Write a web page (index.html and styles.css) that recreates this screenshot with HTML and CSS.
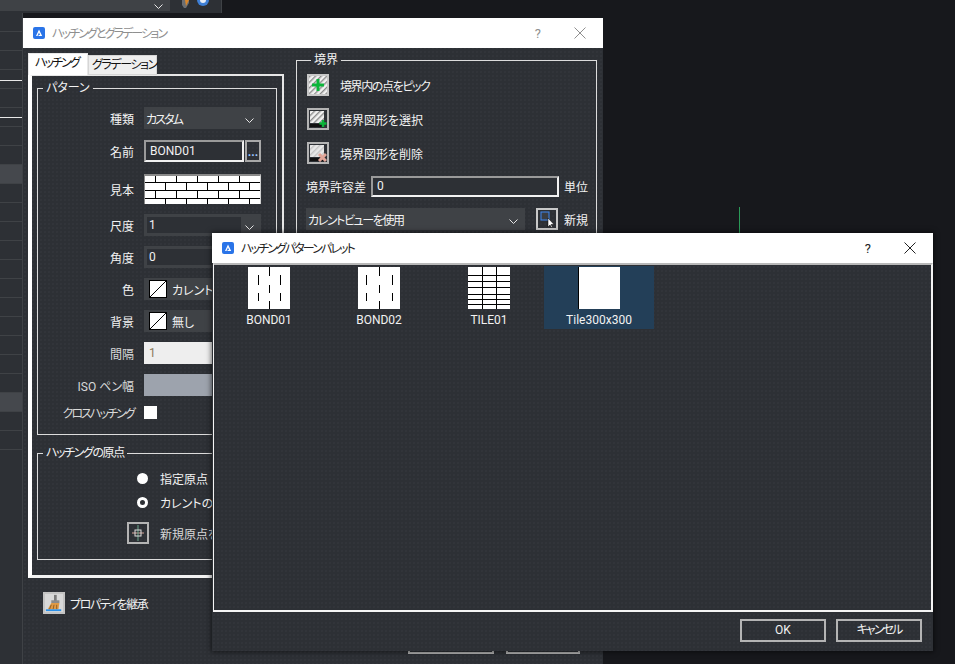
FILE: index.html
```html
<!DOCTYPE html>
<html lang="ja">
<head>
    <meta charset="UTF-8">
    <title>ハッチングとグラデーション</title>
    <link rel="stylesheet" href="styles.css">
</head>
<body>
    <svg class="defs" width="0" height="0">
        <defs>
            <pattern id="hatch" width="4" height="4" patternUnits="userSpaceOnUse" patternTransform="rotate(-45)">
                <rect width="4" height="4" fill="#f2f2f2"/>
                <rect width="4" height="1.4" fill="#8c8c8c"/>
            </pattern>
            <pattern id="hatch-light" width="4" height="4" patternUnits="userSpaceOnUse" patternTransform="rotate(-45)">
                <rect width="4" height="4" fill="#e8e8e8"/>
                <rect width="4" height="1.4" fill="#c4c4c4"/>
            </pattern>
            <pattern id="brick" width="21" height="16" patternUnits="userSpaceOnUse">
                <rect width="21" height="16" fill="#fff"/>
                <rect y="6" width="21" height="1" fill="#000"/>
                <rect y="14" width="21" height="1" fill="#000"/>
                <rect x="10" y="0" width="1" height="6" fill="#000"/>
                <rect x="20" y="7" width="1" height="7" fill="#000"/>
                <rect x="10" y="15" width="1" height="1" fill="#000"/>
            </pattern>
            <symbol id="app-logo" viewBox="0 0 12 12">
                <rect width="12" height="12" rx="2" fill="#2a74e8"/>
                <path d="M6 2.6 3 9h1.5L6 5.6 7 8H5.8l-.5 1H9.2z" fill="#fff"/>
            </symbol>
            <symbol id="chevron" viewBox="0 0 9 5">
                <path d="M.5.5 4.5 4.5 8.5.5" fill="none" stroke="#e6e6e6"/>
            </symbol>
            <symbol id="no-color" viewBox="0 0 18 18">
                <rect x=".5" y=".5" width="17" height="17" fill="#fff" stroke="#000"/>
                <path d="M1 17 17 1" stroke="#000"/>
            </symbol>
        </defs>
    </svg>

    <div class="toolbar">
        <div class="toolbar-field">
            <svg class="chev"><use href="#chevron"/></svg>
        </div>
        <svg class="toolbar-icons" width="40" height="8" viewBox="0 0 40 8">
            <path d="M4 0h7v3l-3 5H6L4 5z" fill="#6b6e72"/>
            <path d="M7 0h4L8 6z" fill="#d9862a"/>
            <path d="M19 0h12a6 6 0 0 1-12 0z" fill="#3e7fd6"/>
            <path d="M22 0h6a3 3 0 0 1-6 0z" fill="#e8eef6"/>
        </svg>
    </div>
    <div class="side-rows">
        <div class="side-row"></div>
        <div class="side-row"></div>
        <div class="side-row"></div>
        <div class="side-row mark-a"></div>
        <div class="side-row"></div>
        <div class="side-row mark-b"></div>
        <div class="side-row"></div>
        <div class="side-row"></div>
        <div class="side-row on"></div>
        <div class="side-row"></div>
        <div class="side-row"></div>
        <div class="side-row"></div>
        <div class="side-row"></div>
        <div class="side-row"></div>
        <div class="side-row"></div>
        <div class="side-row"></div>
        <div class="side-row"></div>
        <div class="side-row"></div>
        <div class="side-row"></div>
        <div class="side-row"></div>
        <div class="side-row on"></div>
        <div class="side-row"></div>
        <div class="side-row"></div>
    </div>
    <div class="axis-tick"></div>

    <div class="window hatch-dialog">
        <div class="titlebar inactive">
            <svg class="logo"><use href="#app-logo"/></svg>
            <span class="title-text kana-tight">ハッチングとグラデーション</span>
            <span class="help">?</span>
            <svg class="close" width="12" height="12" viewBox="0 0 12 12"><path d="M.5.5l11 11M11.5.5l-11 11" stroke="currentColor" fill="none"/></svg>
        </div>
        <div class="dialog-main">
            <div class="col-left">
                <div class="tabs">
                    <div class="tab active kana-tight">ハッチング</div>
                    <div class="tab grad-tab kana">グラデーション</div>
                </div>
                <div class="tab-panel">
                    <fieldset class="group pattern-group">
                        <legend>パターン</legend>
                        <div class="row">
                            <label>種類</label>
                            <div class="field select kana-tight">カスタム<svg class="chev"><use href="#chevron"/></svg></div>
                        </div>
                        <div class="row row-name">
                            <label>名前</label>
                            <div class="input name-input">BOND01</div>
                            <div class="dots">...</div>
                        </div>
                        <div class="row row-sample">
                            <label>見本</label>
                            <svg class="sample" width="117" height="30"><rect width="117" height="30" fill="url(#brick)"/></svg>
                        </div>
                        <div class="row">
                            <label>尺度</label>
                            <div class="field combo"><span class="combo-val">1</span><svg class="chev"><use href="#chevron"/></svg></div>
                        </div>
                        <div class="row">
                            <label>角度</label>
                            <div class="field combo"><span class="combo-val">0</span></div>
                        </div>
                        <div class="row">
                            <label>色</label>
                            <div class="field swatch-field"><svg class="swatch"><use href="#no-color"/></svg>カレント</div>
                        </div>
                        <div class="row">
                            <label>背景</label>
                            <div class="field swatch-field"><svg class="swatch"><use href="#no-color"/></svg>無し</div>
                        </div>
                        <div class="row">
                            <label class="dim">間隔</label>
                            <div class="field off-light">1</div>
                        </div>
                        <div class="row">
                            <label class="dim">ISO ペン幅</label>
                            <div class="field off-gray"></div>
                        </div>
                        <div class="row row-check">
                            <label class="dim kana-tight">クロスハッチング</label>
                            <div class="checkbox"></div>
                        </div>
                    </fieldset>
                    <fieldset class="group origin-group">
                        <legend class="kana">ハッチングの原点</legend>
                        <div class="radio-row"><span class="radio filled"></span>指定原点</div>
                        <div class="radio-row"><span class="radio"></span>カレントの原点を使用</div>
                        <div class="origin-row">
                            <div class="icon-btn">
                                <svg width="18" height="18" viewBox="0 0 18 18">
                                    <path d="M3 9h12" stroke="#d9a79c"/>
                                    <path d="M9 1v16" stroke="#6fa88e"/>
                                    <rect x="6" y="6" width="6" height="6" fill="none" stroke="#ddd"/>
                                </svg>
                            </div>
                            <span class="dim">新規原点を指定</span>
                        </div>
                    </fieldset>
                </div>
                <div class="inherit-row">
                    <div class="icon-btn light">
                        <svg width="20" height="20" viewBox="0 0 20 20">
                            <rect x="10" y="1" width="3" height="7" fill="#7a7a7a"/>
                            <rect x="7" y="7" width="9" height="3" fill="#8a8a8a"/>
                            <path d="M7 10h9l-1 7H3z" fill="#e09a45"/>
                            <path d="M7 12l-2 5M10 12l-1 5M13 12v5" stroke="#8a5a20"/>
                            <rect x="1" y="17" width="17" height="2" fill="#2a8fe8"/>
                        </svg>
                    </div>
                    <span class="kana">プロパティを継承</span>
                </div>
            </div>
            <fieldset class="group border-group">
                <legend>境界</legend>
                <div class="bound-row">
                    <div class="icon-btn pressed">
                        <svg width="18" height="18" viewBox="0 0 18 18">
                            <rect width="18" height="18" fill="url(#hatch)"/>
                            <path d="M9 3v12M3 9h12" stroke="#0bb53a" stroke-width="3"/>
                        </svg>
                    </div>
                    <span class="kana">境界内の点をピック</span>
                </div>
                <div class="bound-row">
                    <div class="icon-btn">
                        <svg width="18" height="18" viewBox="0 0 18 18">
                            <rect x="1" y="1" width="14" height="12" fill="url(#hatch)"/>
                            <rect x="1" y="14" width="14" height="3" fill="#111"/>
                            <path d="M14 10v7M10.500 13.500h7" stroke="#0bb53a" stroke-width="2.500"/>
                        </svg>
                    </div>
                    <span>境界図形を選択</span>
                </div>
                <div class="bound-row">
                    <div class="icon-btn">
                        <svg width="18" height="18" viewBox="0 0 18 18">
                            <rect x="1" y="1" width="14" height="12" fill="url(#hatch-light)"/>
                            <rect x="1" y="14" width="14" height="3" fill="#111"/>
                            <path d="M10 10l7 7M17 10l-7 7" stroke="#e0a598" stroke-width="3"/>
                        </svg>
                    </div>
                    <span>境界図形を削除</span>
                </div>
                <div class="tol-row">
                    <span>境界許容差</span>
                    <div class="input tol-input">0</div>
                    <span>単位</span>
                </div>
                <div class="view-row">
                    <div class="field view-select kana">カレントビューを使用<svg class="chev"><use href="#chevron"/></svg></div>
                    <div class="icon-btn pressed">
                        <svg width="18" height="18" viewBox="0 0 18 18">
                            <rect x="3" y="2" width="8" height="8" fill="#3a3d42" stroke="#3f86f0"/>
                            <path d="M10 8v9l2-2 1.500 2.500 1-.6L13 14.500h3z" fill="#fff" stroke="#000" stroke-width=".5"/>
                        </svg>
                    </div>
                    <span>新規</span>
                </div>
            </fieldset>
        </div>
        <div class="dialog-foot">
            <div class="btn foot-a"></div>
            <div class="btn foot-b"></div>
        </div>
    </div>

    <div class="window palette">
        <div class="titlebar">
            <svg class="logo"><use href="#app-logo"/></svg>
            <span class="title-text kana-tight">ハッチングパターンパレット</span>
            <span class="help">?</span>
            <svg class="close" width="12" height="12" viewBox="0 0 12 12"><path d="M.5.5l11 11M11.5.5l-11 11" stroke="currentColor" fill="none"/></svg>
        </div>
        <div class="pattern-list">
            <div class="pattern-item">
                <svg width="42" height="42" viewBox="0 0 42 42">
                    <rect width="42" height="42" fill="#fff"/>
                    <path d="M21.500 0v9M21.500 18v8M21.500 34v8M10.500 8v10M10.500 26v8M32.500 8v10M32.500 26v8" stroke="#000"/>
                </svg>
                <span>BOND01</span>
            </div>
            <div class="pattern-item">
                <svg width="42" height="42" viewBox="0 0 42 42">
                    <rect width="42" height="42" fill="#fff"/>
                    <path d="M21.500 0v9M21.500 18v8M21.500 34v8M8.500 8v10M8.500 26v8M34.500 8v10M34.500 26v8" stroke="#000"/>
                </svg>
                <span>BOND02</span>
            </div>
            <div class="pattern-item">
                <svg width="42" height="42" viewBox="0 0 42 42">
                    <rect width="42" height="42" fill="#fff"/>
                    <path d="M14.500 0v42M28.500 0v42M0 8.500h42M0 14.500h42M0 20.500h42M0 27.500h42M0 32.500h42M0 37.500h42" stroke="#000"/>
                </svg>
                <span>TILE01</span>
            </div>
            <div class="pattern-item selected">
                <svg width="42" height="42" viewBox="0 0 42 42">
                    <rect width="42" height="42" fill="#fff"/>
                    <path d="M.5 0v42" stroke="#000"/>
                </svg>
                <span>Tile300x300</span>
            </div>
        </div>
        <div class="palette-foot">
            <div class="btn">OK</div>
            <div class="btn kana-tight">キャンセル</div>
        </div>
    </div>
</body>
</html>
```

FILE: styles.css
```css
* {
    box-sizing: border-box;
}

html, body {
    height: 100%;
}

body {
    margin: 0;
    position: relative;
    overflow: hidden;
    background: #17181c;
    color: #f2f2f2;
    font-family: "Roboto", "Noto Sans CJK JP", sans-serif;
    font-size: 12px;
    font-feature-settings: "palt";
}

.defs {
    position: absolute;
}

/* the reference font has much narrower kana than Noto */
.kana {
    letter-spacing: -1.4px;
}

.kana-tight {
    letter-spacing: -1.9px;
}

/* behind the dialogs */
.toolbar {
    display: flex;
    align-items: flex-start;
    width: 222px;
    height: 13px;
    background: #2d3035;
    border-right: 1px solid #3f4246;
}

.toolbar-field {
    display: flex;
    justify-content: flex-end;
    width: 170px;
    height: 11px;
    padding-right: 7px;
    background: #3f4246;
}

.toolbar-icons {
    margin-left: 8px;
}

.side-rows {
    width: 23px;
    height: 651px;
    background: #2d3035;
    border-right: 1px solid #3f4246;
}

.side-row {
    height: 19px;
    border-bottom: 1px solid #3f4246;
}

.side-row.on {
    background: #45484d;
}

.side-row.mark-a {
    background: linear-gradient(#e8e8e8, #e8e8e8) 0 10px / 100% 1px no-repeat;
}

.side-row.mark-b {
    background: linear-gradient(#e8e8e8, #e8e8e8) 0 9px / 100% 1px no-repeat;
}

.axis-tick {
    position: absolute;
    left: 739px;
    top: 207px;
    width: 1px;
    height: 27px;
    background: #2b9a58;
}

/* windows */
.window {
    position: absolute;
    display: flex;
    flex-direction: column;
    background-color: #2d3035;
    background-image: radial-gradient(#32353a 0.7px, transparent 0.8px);
    background-size: 4px 4px;
}

.hatch-dialog {
    left: 23px;
    top: 18px;
    width: 580px;
    height: 646px;
}

.palette {
    left: 212px;
    top: 233px;
    width: 721px;
    height: 418px;
    box-shadow: 0 0 5px 1px rgba(0, 0, 0, 0.55);
}

.titlebar {
    display: flex;
    align-items: center;
    flex: none;
    height: 30px;
    padding: 0 17px 0 10px;
    background: #fff;
    color: #222;
}

.titlebar.inactive {
    color: #8f8f8f;
}

.logo {
    width: 12px;
    height: 12px;
    margin-right: 7px;
}

.title-text {
    flex: 1;
    padding-bottom: 2px;
}

.help {
    margin-right: 33px;
    font-size: 13px;
}

.close {
    color: inherit;
}

/* hatch dialog */
.dialog-main {
    display: flex;
    flex: 1;
    min-height: 0;
    padding: 5px 0 0 5px;
}

.col-left {
    width: 256px;
    margin-right: 12px;
}

.tabs {
    display: flex;
    align-items: flex-start;
    height: 21px;
}

.tab {
    height: 20px;
    margin-top: 2px;
    padding: 0 3px;
    background: #eeeeee;
    border: 1px solid #d6d6d6;
    color: #111;
    line-height: 18px;
    white-space: nowrap;
}

.grad-tab {
    width: 69px;
}

.tab.active {
    width: 60px;
    height: 22px;
    margin-top: 0;
    padding: 0 6px;
    background: #fff;
    border: 1px solid #e8e8e8;
    border-bottom: 0;
    z-index: 1;
}

.tab-panel {
    height: 504px;
    padding: 4px 5px 0 5px;
    border: 2px solid #e6e6e6;
    border-left: 4px solid #fff;
    border-bottom: 3px solid #f2f2f2;
}

.group {
    margin: 0;
    min-width: 0;
    padding: 0;
    border: 1px solid #dcdcdc;
}

.group legend {
    margin-left: 5px;
    padding: 0 3px;
    line-height: 16px;
}

.pattern-group {
    height: 355px;
    padding-top: 11px;
}

.row {
    display: flex;
    align-items: center;
    height: 22px;
    margin-bottom: 10px;
    white-space: nowrap;
}

.row label {
    width: 96px;
    margin-right: 10px;
    text-align: right;
}

.dim {
    color: #d8d8d8;
}

.row-name {
    margin-top: 11px;
    margin-bottom: 12px;
}

.row-sample {
    height: 30px;
}

.row-check {
    height: 13px;
}

.field {
    display: flex;
    align-items: center;
    position: relative;
    width: 117px;
    height: 22px;
    background: #3f4246;
}

.chev {
    width: 9px;
    height: 5px;
    margin: 4px 0 0 auto;
}

.select {
    padding: 0 7px 0 2px;
}

.input {
    display: flex;
    align-items: center;
    height: 22px;
    padding-left: 4px;
    background: #2d3035;
    border: 2px solid #9a9a9a;
    border-color: #9a9a9a #f2f2f2 #f2f2f2 #9a9a9a;
}

.name-input {
    width: 100px;
}

.dots {
    width: 16px;
    height: 22px;
    margin-left: 1px;
    border: 2px solid #a8a8a8;
    color: #9cc4ff;
    font-weight: 700;
    line-height: 20px;
    text-align: center;
}

.sample {
    border-top: 2px solid #8a8a8a;
    border-left: 1px solid #8a8a8a;
    border-right: 1px solid #d0d0d0;
}

.combo {
    padding: 3px 7px 3px 3px;
}

.combo-val {
    display: block;
    flex: none;
    width: 94px;
    height: 16px;
    padding-left: 2px;
    background: #2d3035;
    line-height: 16px;
}

.swatch-field {
    padding-left: 5px;
}

.swatch {
    flex: none;
    width: 18px;
    height: 18px;
    margin-right: 5px;
}

.off-light {
    padding-left: 5px;
    background: #eeeeee;
    color: #8a7a5a;
}

.off-gray {
    background: #9da3ad;
}

.checkbox {
    width: 13px;
    height: 13px;
    background: #fff;
}

.origin-group {
    height: 115px;
    margin-top: 10px;
    padding-top: 8px;
}

.radio-row {
    display: flex;
    align-items: center;
    height: 18px;
    margin: 0 0 6px 99px;
    white-space: nowrap;
}

.radio {
    flex: none;
    width: 11px;
    height: 11px;
    margin-right: 12px;
    border: 3px solid #fff;
    border-radius: 50%;
}

.radio.filled {
    background: #fff;
}

.origin-row {
    display: flex;
    align-items: center;
    margin: 11px 0 0 89px;
    gap: 11px;
    white-space: nowrap;
}

.icon-btn {
    display: flex;
    align-items: center;
    justify-content: center;
    flex: none;
    width: 22px;
    height: 22px;
    border: 2px solid #b4b4b4;
}

.icon-btn.light {
    background: #d8d8d8;
    border-color: #c4c4c4;
}

.icon-btn.pressed {
    border-color: #c8c8c8;
    outline: 1px solid #2d3035;
}

.inherit-row {
    display: flex;
    align-items: center;
    gap: 5px;
    margin: 14px 0 0 15px;
}

.border-group {
    width: 301px;
    height: 420px;
    margin-top: -1px;
    padding: 6px 0 0 9px;
}

.bound-row {
    display: flex;
    align-items: center;
    gap: 11px;
    height: 22px;
    margin: 0 0 12px 1px;
}

.tol-row {
    display: flex;
    align-items: center;
    gap: 5px;
    height: 20px;
}

.tol-input {
    width: 188px;
    height: 21px;
}

.view-row {
    display: flex;
    align-items: center;
    gap: 11px;
    margin-top: 12px;
}

.view-select {
    width: 219px;
    padding: 0 7px 0 2px;
}

.view-row span {
    margin-left: -5px;
}

.dialog-foot {
    display: flex;
    justify-content: flex-end;
    flex: none;
    gap: 12px;
    padding: 0 23px 10px 0;
}

.btn {
    width: 86px;
    height: 23px;
    border: 2px solid #b4b4b4;
    line-height: 19px;
    text-align: center;
}

.foot-b {
    width: 74px;
}

/* palette dialog */
.pattern-list {
    display: flex;
    align-items: flex-start;
    flex: none;
    height: 349px;
    margin-left: 1px;
    padding: 1px 0 0 0;
    border: 2px solid #f4f4f4;
    border-left-width: 1px;
    border-top-color: #b8b8b8;
}

.pattern-item {
    display: flex;
    flex-direction: column;
    align-items: center;
    width: 110px;
    height: 63px;
    padding-top: 1px;
    gap: 4px;
}

.pattern-item svg {
    flex: none;
}

.pattern-item.selected {
    background: #233f58;
}

.palette-foot {
    display: flex;
    justify-content: flex-end;
    gap: 10px;
    padding: 7px 11px 0 0;
}
```
